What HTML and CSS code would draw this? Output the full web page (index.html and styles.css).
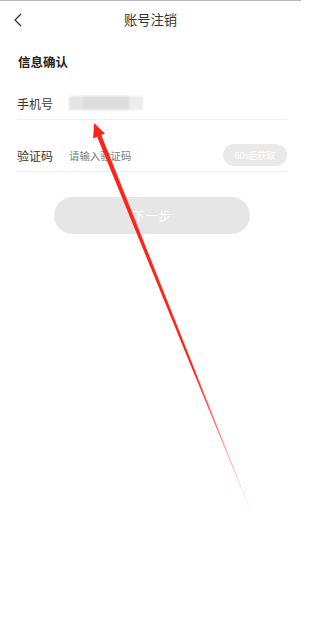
FILE: index.html
```html
<!DOCTYPE html>
<html lang="zh">
<head>
<meta charset="utf-8">
<link rel="stylesheet" href="styles.css">
</head>
<body>
<div class="page">
  <div class="topline"></div>
  <header class="nav">
    <svg class="back" width="10" height="14" viewBox="0 0 10 14"><path d="M8 1 L2 7 L8 13" fill="none" stroke="#333" stroke-width="1.3"/></svg>
    <div class="title">账号注销</div>
  </header>
  <div class="section-title">信息确认</div>
  <div class="form">
    <div class="row phone">
      <span class="label">手机号</span>
      <span class="masked"><i class="b1"></i><i class="b2"></i><i class="b3"></i></span>
    </div>
    <div class="row code">
      <span class="label">验证码</span>
      <span class="placeholder">请输入验证码</span>
      <span class="sms">60s后获取</span>
    </div>
  </div>
  <div class="next">下一步</div>
  <svg class="arrow" width="301" height="634" viewBox="0 0 301 634">
    <defs>
      <linearGradient id="fade" gradientUnits="userSpaceOnUse" x1="99" y1="136" x2="253" y2="517">
        <stop offset="0" stop-color="#ff2419"/>
        <stop offset="0.6" stop-color="#ff2419"/>
        <stop offset="1" stop-color="#ff2419" stop-opacity="0"/>
      </linearGradient>
    </defs>
    <polygon points="101.2,134.8 97,136.6 252.8,517 253.3,517" fill="url(#fade)"/>
    <polygon points="94,123 93.2,138.5 105,133.6" fill="#ff2419"/>
  </svg>
</div>
</body>
</html>
```
FILE: styles.css
```css
* { box-sizing: border-box; }
html, body { margin: 0; padding: 0; background: #fff; overflow: hidden; }
body { font-family: "Noto Sans CJK SC", "Noto Sans", sans-serif; color: #222; }
.page { position: relative; width: 301px; height: 634px; overflow: hidden; }
.topline { height: 1px; background: #b8b8b8; }
.nav { position: relative; height: 38px; display: flex; align-items: center; justify-content: center; }
.back { position: absolute; left: 13px; top: 12px; }
.title { font-size: 13.3px; color: #333; line-height: 18px; }
.section-title { margin: 14px 0 0 18px; font-size: 12.5px; font-weight: bold; line-height: 18px; color: #222; }
.form { padding: 0 14px 0 17px; }
.row { display: flex; align-items: center; border-bottom: 1px solid #efefef; }
.row.phone { height: 49px; padding-top: 24px; padding-bottom: 6px; }
.row.code { height: 52px; padding-top: 27px; padding-bottom: 6px; }
.label { font-size: 12px; line-height: 18px; color: #333; width: 52px; }
.masked { display: flex; height: 14px; margin-top: -2px; filter: blur(1px); }
.masked i { display: block; height: 14px; }
.masked .b1 { width: 14px; background: #e4e4e4; }
.masked .b2 { width: 46px; background: #dcdcdc; }
.masked .b3 { width: 14px; background: #ececec; }
.placeholder { font-size: 10.4px; color: #7a7a7a; line-height: 18px; }
.sms { margin-left: auto; width: 64px; height: 22px; border-radius: 11px; background: #e9e9e9; color: #fff; font-size: 9px; display: flex; align-items: center; justify-content: center; margin-top: -2px; }
.next { margin: 25px 0 0 54px; width: 196px; height: 37px; border-radius: 18.5px; background: #e6e6e6; color: #fff; font-size: 12.5px; display: flex; align-items: center; justify-content: center; letter-spacing: 0.5px; }
.arrow { position: absolute; left: 0; top: 0; pointer-events: none; }
```
